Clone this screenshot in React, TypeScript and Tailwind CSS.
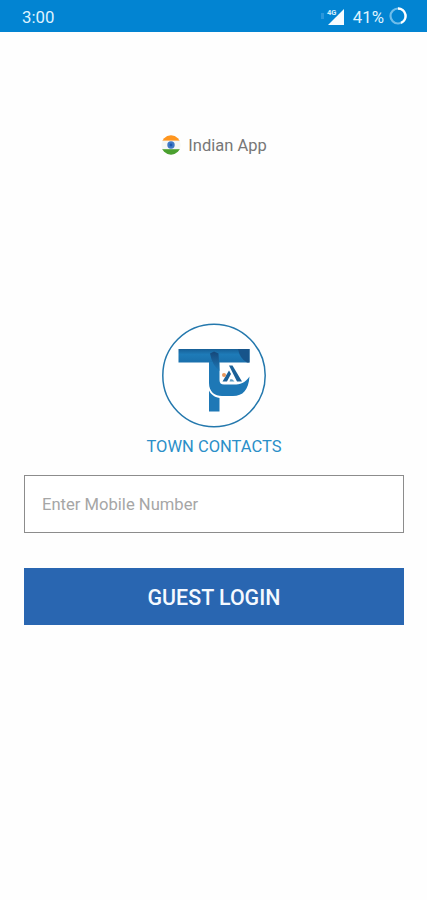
import React from 'react'

export default function App() {
  return (
    <div className="flex h-[900px] w-full flex-col bg-[#fefefe] font-['Roboto',sans-serif]">
      <StatusBar />

      <main className="flex flex-col pr-[23px] pl-6">
        <div className="mt-[101px] flex h-6 items-center justify-center gap-[7px]">
          <IndiaFlag />
          <span className="pt-px text-[16.5px] leading-6 text-[#777777]">Indian App</span>
        </div>

        <div className="mt-[158px] flex flex-col items-center">
          <Logo />
          <h1 className="text-[16.5px] leading-6 text-[#2b8fc8]">TOWN CONTACTS</h1>
        </div>

        <input
          type="tel"
          placeholder="Enter Mobile Number"
          className="mt-[16px] h-[58px] w-full border border-[#8c8c8c] bg-white px-[17px] text-[16.6px] outline-none placeholder:text-[#a6a6a6]"
        />

        <button
          type="button"
          className="mt-[35px] h-[57px] w-full bg-[#2966b1] pt-[3px] text-[21.4px] font-medium text-[#f4f9ff]"
        >
          GUEST LOGIN
        </button>
      </main>
    </div>
  )
}

function StatusBar() {
  return (
    <header className="flex h-8 shrink-0 items-center bg-[#0284d2] pr-[20px] pl-[22px] text-[16.8px] text-[#dff3ff]">
      <span className="mt-[3px]">3:00</span>
      <div className="ml-auto flex items-center">
        <SignalIcon />
        <span className="mt-[3px] ml-[7px]">41%</span>
        <BatteryIcon />
      </div>
    </header>
  )
}

function SignalIcon() {
  return (
    <svg width="26" height="20" viewBox="0 0 26 20">
      <rect x="1" y="7" width="3" height="6" fill="#2b97db" />
      <path d="M24 3v16H8z" fill="#f5fbff" />
      <path d="M6 2H17.5V9L16 10.5H6z" fill="#0284d2" />
      <text x="7" y="9" fontSize="7.5" fontWeight="700" fill="#d5eefc">
        4G
      </text>
    </svg>
  )
}

function BatteryIcon() {
  return (
    <svg className="ml-[5px]" width="18" height="18" viewBox="0 0 18 18" fill="none">
      <circle cx="9" cy="9" r="7.5" stroke="#70bdea" strokeWidth="2.2" />
      <path d="M9 1.5a7.5 7.5 0 0 1 3 14.4" stroke="#ffffff" strokeWidth="2.4" />
    </svg>
  )
}

function IndiaFlag() {
  return (
    <svg width="20" height="20" viewBox="0 0 20 20">
      <defs>
        <clipPath id="flag">
          <circle cx="10" cy="10" r="9.7" />
        </clipPath>
      </defs>
      <g clipPath="url(#flag)">
        <rect width="20" height="20" fill="#f4f6f5" />
        <rect width="20" height="5.6" fill="#ff961f" />
        <rect y="14.2" width="20" height="5.8" fill="#4ba02f" />
      </g>
      <circle cx="10" cy="10" r="3.7" fill="#3f78c5" />
      <circle cx="10" cy="10" r="1.4" fill="#1a56ae" />
    </svg>
  )
}

function Logo() {
  return (
    <svg width="120" height="120" viewBox="0 0 120 120">
      <defs>
        <linearGradient id="bar" x1="0" y1="0" x2="0" y2="1">
          <stop offset="0" stopColor="#175f96" />
          <stop offset="0.4" stopColor="#1e7bb8" />
          <stop offset="1" stopColor="#1a70ac" />
        </linearGradient>
        <linearGradient id="fold" x1="0" y1="0" x2="0" y2="1">
          <stop offset="0" stopColor="#154779" />
          <stop offset="1" stopColor="#1e78b6" />
        </linearGradient>
      </defs>
      <circle cx="60" cy="60.5" r="51.2" fill="#ffffff" stroke="#2478ad" strokeWidth="1.5" />
      <path d="M24.5 34H95.5V47.5H24.5z" fill="url(#bar)" />
      <path d="M84 34H95.5V47.5H93Q86 44 84 34z" fill="#17548a" />
      <path
        d="M55 47V68C55 77 61 81 68 81H79C89 81 94.5 75 95.5 61.5C91 68 86 69.5 80 69.5H70C67 69.5 65.5 68 65.5 65V47z"
        fill="#1e78b6"
      />
      <path d="M56 38.5L60 36.5L64.5 38.5L65.5 56Q58 50 56 38.5z" fill="url(#fold)" />
      <path d="M55 75.5C57 79.5 60 81.8 65.5 83V96.5H55z" fill="#1e78b6" />
      <path d="M75 50.5H78.5L88 66.5H83z" fill="#1b6198" />
      <path d="M75 55.5L77 59L73 66.5H68.5z" fill="#1b6198" />
      <path d="M76.5 64L78.5 64.5L80.5 66.5H75.5z" fill="#5f9dc4" />
      <circle cx="70" cy="60" r="2" fill="#e9975c" />
    </svg>
  )
}
